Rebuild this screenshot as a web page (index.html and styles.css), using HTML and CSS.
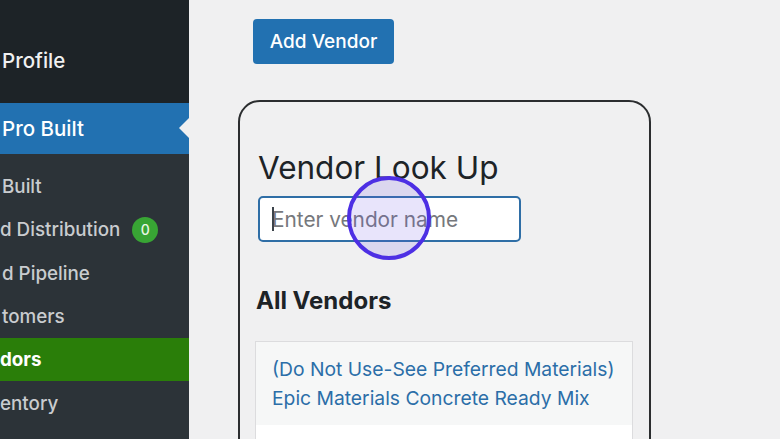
FILE: index.html
```html
<!DOCTYPE html>
<html>
<head>
  <meta charset="utf-8" />
  <title>Vendors ‹ Pro Built</title>
  <meta name="viewport" content="width=device-width, initial-scale=1.0">
  <link rel="stylesheet" href="styles.css">
</head>
<body>
  <!-- Admin menu (scrolled, left part cut off) -->
  <aside class="sidebar">
    <div class="menu-top">
      <div class="menu-item">Profile</div>
    </div>
    <div class="menu-current">
      <span>Pro Built</span>
      <span class="menu-arrow"></span>
    </div>
    <ul class="submenu">
      <li>Built</li>
      <li class="flush">d Distribution <span class="badge">0</span></li>
      <li>d Pipeline</li>
      <li>tomers</li>
      <li class="active flush">dors</li>
      <li class="flush">entory</li>
    </ul>
  </aside>

  <main class="content">
    <button class="btn-primary">Add Vendor</button>

    <section class="card">
      <h2 class="card-title">Vendor Look Up</h2>
      <div class="search">
        <input type="text" class="search-input" placeholder="Enter vendor name">
        <span class="caret"></span>
        <!-- click indicator from the screen recording -->
        <span class="click-ring"></span>
      </div>

      <h3 class="list-title">All Vendors</h3>
      <ul class="vendor-list">
        <li><a href="#">(Do Not Use-See Preferred Materials) Epic Materials Concrete Ready Mix</a></li>
        <li></li>
      </ul>
    </section>
  </main>
</body>
</html>
```

FILE: styles.css
```css
html, body {
  margin: 0;
  height: 439px;
  overflow: hidden;
}
body {
  display: flex;
  font-family: Inter, "Liberation Sans", sans-serif;
  background: #f0f0f1;
  color: #1d2327;
}

/* sidebar */
.sidebar {
  width: 189px;
  flex: none;
  background: #2c3338;
  overflow: hidden;
}
.menu-top {
  background: #1d2327;
  height: 103px;
  padding-top: 48px;
  box-sizing: border-box;
}
.menu-item {
  font-size: 20.5px;
  color: #f0f0f1;
  padding-left: 2px;
  font-weight: 500;
}
.menu-current {
  position: relative;
  background: #2271b1;
  height: 51px;
  display: flex;
  align-items: center;
  padding-left: 2px;
  font-size: 20.5px;
  font-weight: 500;
  color: #fff;
}
.menu-arrow {
  position: absolute;
  right: 0;
  top: 15px;
  border: 10px solid transparent;
  border-right: 10px solid #f0f0f1;
  border-left-width: 0;
}
.submenu {
  list-style: none;
  margin: 0;
  padding: 11px 0 0;
}
.submenu li {
  height: 43.3px;
  display: flex;
  align-items: center;
  padding-left: 2px;
  font-size: 18.8px;
  font-weight: 500;
  color: #c9cccf;
  white-space: nowrap;
}
.submenu li.flush {
  padding-left: 0;
}
.submenu li.active {
  background: #2a7e09;
  color: #fff;
  font-weight: 700;
}
.badge {
  display: inline-flex;
  align-items: center;
  justify-content: center;
  width: 26px;
  height: 26px;
  margin-left: 12px;
  border-radius: 50%;
  background: #38a534;
  color: #e9f7e6;
  font-size: 14px;
}

/* main area */
.content {
  flex: 1;
  padding: 19px 0 0 49px;
}
.btn-primary {
  display: block;
  margin-left: 15px;
  width: 141px;
  height: 45px;
  border: 0;
  border-radius: 4px;
  background: #2271b1;
  color: #fff;
  font-family: inherit;
  font-size: 19px;
  font-weight: 500;
}
.card {
  margin-top: 36px;
  width: 413px;
  height: 400px;
  box-sizing: border-box;
  border: 2px solid #2b2d2f;
  border-radius: 22px;
  padding: 47px 15px 0;
}
.card-title {
  margin: 0 0 0 3px;
  font-size: 31.5px;
  font-weight: 400;
  line-height: 38px;
}
.search {
  position: relative;
  margin: 9px 0 0 3px;
  width: 263px;
}
.search-input {
  display: block;
  width: 263px;
  height: 46px;
  box-sizing: border-box;
  border: 2px solid #2f6ea6;
  border-radius: 5px;
  background: #fff;
  padding: 0 12px;
  font-family: inherit;
  font-size: 20.8px;
  outline: none;
}
.search-input::placeholder {
  color: #76787c;
}
.caret {
  position: absolute;
  left: 14px;
  top: 11px;
  width: 2px;
  height: 24px;
  background: #3c434a;
}
.click-ring {
  position: absolute;
  left: 89px;
  top: -20px;
  width: 76px;
  height: 76px;
  border: 4px solid #4d2fe4;
  border-radius: 50%;
  background: rgba(110, 90, 230, 0.16);
}
.list-title {
  margin: 43px 0 0 1px;
  font-size: 24px;
  font-weight: 700;
  line-height: 32px;
}
.vendor-list {
  list-style: none;
  margin: 24px 0 0;
  padding: 0;
  width: 376px;
  border: 1px solid #dcdcde;
  background: #fff;
}
.vendor-list li {
  padding: 13px 16px 12px;
  line-height: 29px;
  font-size: 19.3px;
  min-height: 58px;
}
.vendor-list li:first-child {
  background: #f6f7f7;
}
.vendor-list a {
  color: #2b6ea8;
  text-decoration: none;
}
```
